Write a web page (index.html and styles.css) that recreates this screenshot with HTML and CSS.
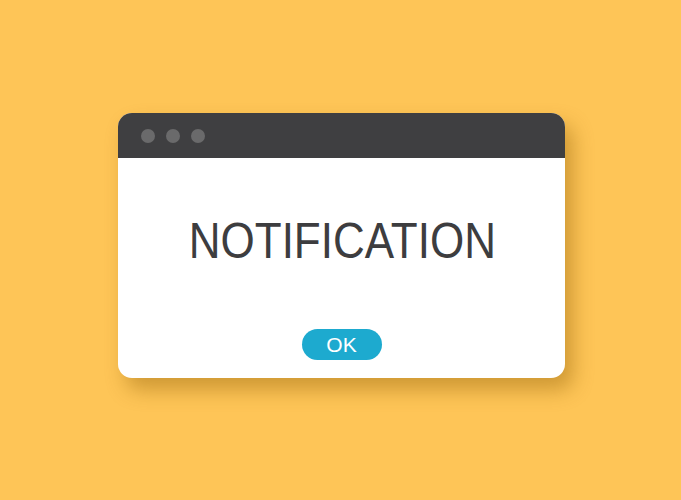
FILE: index.html
```html
<!DOCTYPE html>
<html>
<head>
<meta charset="utf-8">
<link rel="stylesheet" href="styles.css">
</head>
<body>
<div class="stage">
  <div class="window">
    <div class="titlebar">
      <span class="dot"></span><span class="dot"></span><span class="dot"></span>
    </div>
    <div class="content">
      <div class="title">NOTIFICATION</div>
      <div class="ok">OK</div>
    </div>
  </div>
</div>
</body>
</html>
```
FILE: styles.css
```css
html, body {
  margin: 0;
  padding: 0;
  width: 681px;
  height: 500px;
  background: #fec557;
  overflow: hidden;
}
.stage {
  box-sizing: border-box;
  width: 681px;
  height: 500px;
  padding: 113px 0 0 118px;
}
.window {
  width: 447px;
  height: 265px;
  border-radius: 14px;
  overflow: hidden;
  background: #ffffff;
  box-shadow: 8px 12px 20px rgba(150, 100, 10, 0.45);
  display: flex;
  flex-direction: column;
}
.titlebar {
  height: 45px;
  background: #3f3f41;
  display: flex;
  align-items: center;
  gap: 11px;
  padding: 0 0 0 23px;
  flex: none;
}
.dot {
  width: 14px;
  height: 14px;
  border-radius: 50%;
  background: #6a6a6b;
}
.content {
  flex: 1;
  display: flex;
  flex-direction: column;
  align-items: center;
}
.title {
  margin-top: 53px;
  font-family: "Liberation Sans", Arial, sans-serif;
  font-size: 50px;
  line-height: 60px;
  color: #3d3d3f;
  transform: scaleX(0.88);
  padding-left: 3px;
  white-space: nowrap;
}
.ok {
  margin-top: 58px;
  width: 80px;
  height: 31px;
  border-radius: 16px;
  background: #1daacf;
  color: #ffffff;
  font-family: "Liberation Sans", Arial, sans-serif;
  font-size: 21px;
  line-height: 31px;
  text-align: center;
}
```
